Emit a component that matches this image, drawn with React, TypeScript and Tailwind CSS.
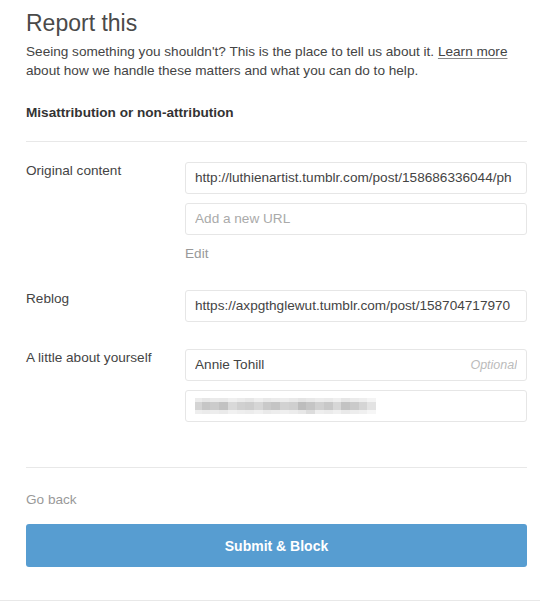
import React from "react";

const mid = ["#d4d4d4","#c6c6c6","#cbcbcb","#c2c2c2","#d9d9d9","#d0d0d0","#cdcdcd","#d6d6d6","#c9c9c9","#c4c4c4","#d2d2d2","#cfcfcf","#bdbdbd","#c5c5c5","#d0d0d0","#c8c8c8","#d7d7d7","#c3c3c3","#cacaca","#d5d5d5","#e3e3e3"];
const top = ["#ececec","#e6e6e6","#eaeaea","#e9e9e9","#efefef","#ebebeb","#e7e7e7","#eeeeee","#e8e8e8","#ebebeb","#ededed","#e9e9e9","#e4e4e4","#e8e8e8","#ececec","#eaeaea","#efefef","#e6e6e6","#ebebeb","#eeeeee","#f4f4f4"];
const bot = ["#eeeeee","#ebebeb","#ededed","#eaeaea","#f1f1f1","#eeeeee","#ececec","#f0f0f0","#eaeaea","#ededed","#efefef","#ececec","#e7e7e7","#dcdcdc","#eeeeee","#ebebeb","#f0f0f0","#e9e9e9","#ededed","#f0f0f0","#f6f6f6"];

function Blur() {
  return (
    <div className="flex flex-col w-[183px]">
      <div className="flex h-[4px]">{top.map((c, i) => <div key={i} className="flex-1" style={{ background: c }} />)}</div>
      <div className="flex h-[8px]">{mid.map((c, i) => <div key={i} className="flex-1" style={{ background: c }} />)}</div>
      <div className="flex h-[4px]">{bot.map((c, i) => <div key={i} className="flex-1" style={{ background: c }} />)}</div>
    </div>
  );
}

function Field({ children }: { children: React.ReactNode }) {
  return (
    <div className="h-[32px] border border-[#e6e6e6] rounded-[3px] bg-white flex items-center px-[9px] text-[#444]">
      <div className="flex-1 flex items-center overflow-hidden whitespace-nowrap">{children}</div>
    </div>
  );
}

export default function App() {
  return (
    <div
      className="w-[540px] h-[601px] bg-white border-b border-[#e8e8e8] pl-[26px] pr-[13px] pt-[9px] text-[13.6px] leading-[18px] text-[#444]"
      style={{ fontFamily: '"Liberation Sans", Arial, sans-serif' }}
    >
      <h1 className="text-[23px] leading-[28px] text-[#4a4a4a]">Report this</h1>
      <p className="mt-[5px] leading-[19px]">
        Seeing something you shouldn't? This is the place to tell us about it.{" "}
        <span className="underline decoration-[#888] underline-offset-2">Learn more</span>
        <br />
        about how we handle these matters and what you can do to help.
      </p>
      <div className="mt-[24px] font-bold text-[#333]">Misattribution or non-attribution</div>
      <div className="mt-[19px] border-t border-[#e8e8e8]" />

      <div className="mt-[20px] grid grid-cols-[159px_342px] gap-y-[27px]">
        <div>Original content</div>
        <div className="flex flex-col">
          <Field>http://luthienartist.tumblr.com/post/158686336044/ph</Field>
          <div className="mt-[9px]">
            <Field><span className="text-[#aaa]">Add a new URL</span></Field>
          </div>
          <div className="mt-[10px] text-[#999]">Edit</div>
        </div>

        <div>Reblog</div>
        <div>
          <Field>https://axpgthglewut.tumblr.com/post/158704717970</Field>
        </div>

        <div>A little about yourself</div>
        <div className="flex flex-col">
          <Field>
            <span className="flex-1">Annie Tohill</span>
            <span className="italic text-[#bbb] text-[12.5px]">Optional</span>
          </Field>
          <div className="mt-[9px]">
            <Field><div className="-ml-[2px]"><Blur /></div></Field>
          </div>
        </div>
      </div>

      <div className="mt-[45px] w-[501px] border-t border-[#e8e8e8]" />
      <div className="mt-[23px] text-[#999]">Go back</div>
      <button className="mt-[15px] w-[501px] h-[43px] rounded-[3px] bg-[#579dd1] text-white font-bold text-[14px]">
        Submit &amp; Block
      </button>
    </div>
  );
}
